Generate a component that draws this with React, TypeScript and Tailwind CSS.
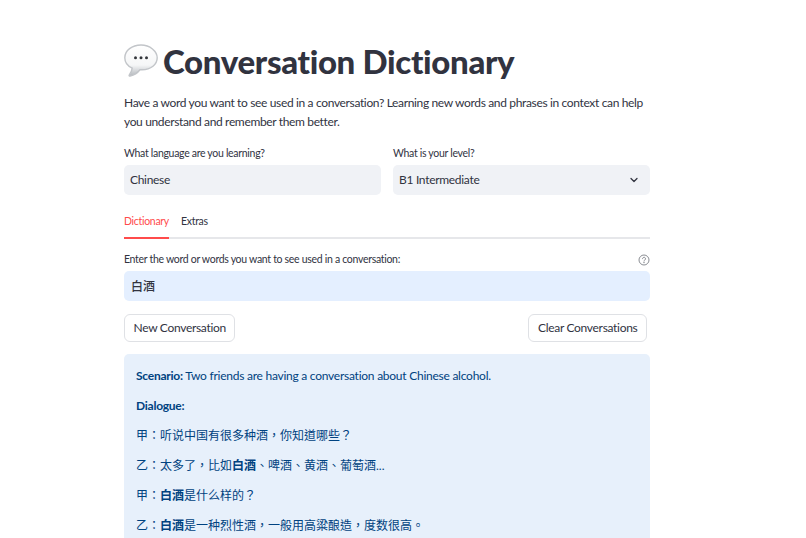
import { ChevronDown } from "lucide-react";
import type { ReactNode } from "react";

const sans = "font-['Lato','Noto_Sans_CJK_TC',sans-serif]";

function BubbleEmoji() {
  return (
    <svg width="34" height="34" viewBox="0 0 34 34" className="shrink-0">
      <defs>
        <linearGradient id="bubble" x1="0" y1="0" x2="0" y2="1">
          <stop offset="0" stopColor="#ffffff" />
          <stop offset="0.65" stopColor="#f5f6f7" />
          <stop offset="1" stopColor="#b4b8bd" />
        </linearGradient>
      </defs>
      <path
        d="M17 1C8 1 .8 6.500 .8 13.800c0 4.800 3 8.400 7.400 10.400-.3 2.400-1.300 4.800-2.900 6.700-.5.600 0 1.300.8 1.100 3.900-.9 7.500-3.200 9.900-6.300.6.100 1.300.1 2 .1 9 0 15.200-5.400 15.200-12S26 1 17 1z"
        fill="url(#bubble)"
        stroke="#c2c5c9"
        strokeWidth="1.400"
      />
      <circle cx="11.500" cy="13.800" r="1.500" fill="#33363b" />
      <circle cx="17" cy="13.800" r="1.500" fill="#33363b" />
      <circle cx="22.500" cy="13.800" r="1.500" fill="#33363b" />
    </svg>
  );
}

function Field(props: { label: string; children: ReactNode }) {
  return (
    <div className="flex min-w-0 flex-1 flex-col">
      <div className="mb-[4px] h-[16px] text-[10.5px] leading-[16px] text-[#31333f]">
        {props.label}
      </div>
      <div className="flex h-[30px] items-center justify-between rounded-[5px] bg-[#f0f2f6] pl-[6px] pr-[10px] text-[12px] text-[#31333f]">
        {props.children}
      </div>
    </div>
  );
}

function OutlineButton(props: { children: ReactNode }) {
  return (
    <button className="h-[28px] rounded-[6px] border border-[#dfe1e5] bg-white px-[8.500px] text-[12px] text-[#31333f]">
      {props.children}
    </button>
  );
}

function Line(props: { children: ReactNode }) {
  return <p className="mb-[11px] h-[19px] leading-[19px]">{props.children}</p>;
}

export default function App() {
  return (
    <div className={`h-[538px] overflow-hidden bg-white tracking-[-0.3px] ${sans}`}>
      <div className="ml-[124px] flex w-[526px] flex-col pt-[41px]">
        <h1 className="flex h-[40px] items-center gap-[5px] text-[33px] font-black leading-[40px] tracking-[-0.33px] text-[#31333f]">
          <BubbleEmoji />
          <span>Conversation Dictionary</span>
        </h1>
        <p className="mt-[12px] text-[12px] leading-[19px] tracking-[-0.35px] text-[#31333f]">
          Have a word you want to see used in a conversation? Learning new words and phrases in context can help you understand and remember them better.
        </p>

        <div className="mt-[14px] flex gap-[12px]">
          <Field label="What language are you learning?">Chinese</Field>
          <Field label="What is your level?">
            <span>B1 Intermediate</span>
            <ChevronDown size={12} strokeWidth={2.500} className="text-[#31333f]" />
          </Field>
        </div>

        <div className="mt-[15px] flex h-[29px] gap-[12px] border-b-2 border-[#e6e7ea] text-[10.5px]">
          <div className="-mb-[2px] h-[29px] border-b-2 border-[#ff4b4b] pt-[3px] leading-[16px] text-[#ff4b4b]">Dictionary</div>
          <div className="pt-[3px] leading-[16px] text-[#31333f]">Extras</div>
        </div>

        <div className="mt-[13px] flex h-[16px] items-center justify-between text-[10.5px] text-[#31333f]">
          <span>Enter the word or words you want to see used in a conversation:</span>
          <svg width="12" height="12" viewBox="0 0 12 12" fill="none" stroke="#7d8087" strokeWidth="0.9">
            <circle cx="6" cy="6" r="5" />
            <path d="M4.500 4.700a1.500 1.500 0 1 1 2.300 1.300c-.5.300-.8.600-.8 1.100" strokeLinecap="round" />
            <circle cx="6" cy="8.700" r="0.300" />
          </svg>
        </div>
        <div className="mt-[3px] flex h-[30px] items-center rounded-[5px] bg-[#e4efff] px-[7px] pt-[1px] text-[12px] font-medium tracking-normal text-[#31333f]">
          白酒
        </div>

        <div className="mt-[13px] flex justify-between pr-[3px]">
          <OutlineButton>New Conversation</OutlineButton>
          <OutlineButton>Clear Conversations</OutlineButton>
        </div>

        <div className="mt-[12px] rounded-[5px] bg-[#e7f0fb] px-[12px] pt-[12px] pb-[12px] text-[12px] tracking-[-0.25px] text-[#004280]">
          <Line>
            <b>Scenario:</b> Two friends are having a conversation about Chinese alcohol.
          </Line>
          <Line>
            <b>Dialogue:</b>
          </Line>
          <div className="tracking-normal">
            <Line>甲：听说中国有很多种酒，你知道哪些？</Line>
            <Line>
              乙：太多了，比如<b>白酒</b>、啤酒、黄酒、葡萄酒...
            </Line>
            <Line>
              甲：<b>白酒</b>是什么样的？
            </Line>
            <Line>
              乙：<b>白酒</b>是一种烈性酒，一般用高粱酿造，度数很高。
            </Line>
          </div>
        </div>
      </div>
    </div>
  );
}
